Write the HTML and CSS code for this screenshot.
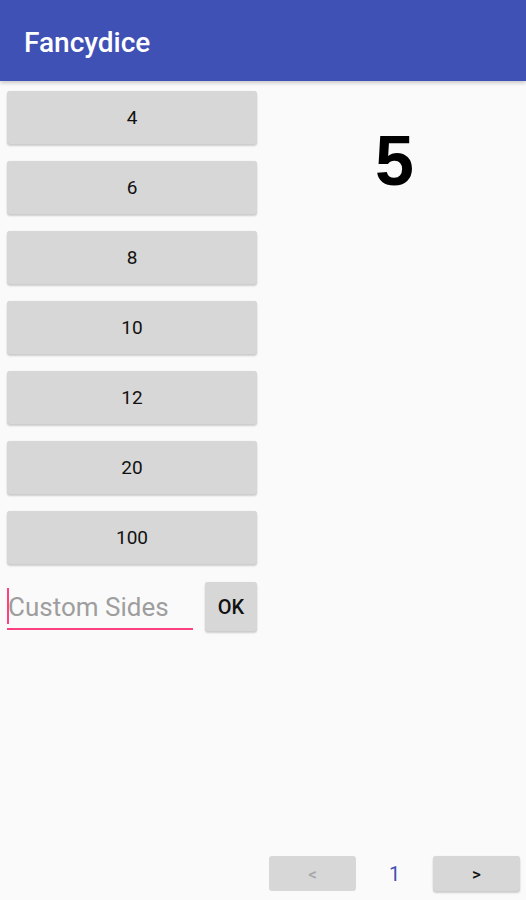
FILE: index.html
```html
<!DOCTYPE html>
<html>
<head>
    <meta charset="UTF-8">
    <meta name="viewport" content="width=device-width, initial-scale=1.0">
    <title>Fancydice</title>
    <link rel="stylesheet" href="styles.css">
</head>
<body>
    <div class="app">
        <header class="app-bar">
            <h1>Fancydice</h1>
        </header>
        <main class="content">
            <div class="dice-list">
                <button class="btn die">4</button>
                <button class="btn die">6</button>
                <button class="btn die">8</button>
                <button class="btn die">10</button>
                <button class="btn die">12</button>
                <button class="btn die">20</button>
                <button class="btn die">100</button>
                <div class="custom-row">
                    <div class="custom-input">
                        <span class="cursor"></span>
                        <input type="text" placeholder="Custom Sides">
                    </div>
                    <button class="btn ok">OK</button>
                </div>
            </div>
            <div class="result">
                <span class="roll">5</span>
            </div>
        </main>
        <footer class="pager">
            <button class="btn page-btn" disabled>&lt;</button>
            <span class="page-num">1</span>
            <button class="btn page-btn">&gt;</button>
        </footer>
    </div>
</body>
</html>
```

FILE: styles.css
```css
:root {
    --color-primary: #3f51b5;
    --color-accent: #ff4081;
    --color-bg: #fafafa;
    --color-button: #d6d7d6;
    --color-text: #111;
    --color-hint: #9e9e9e;
}

body {
    margin: 0;
    padding: 0;
    background-color: var(--color-bg);
    font-family: Roboto, "Noto Sans", sans-serif;
    color: var(--color-text);
}

.app {
    display: flex;
    flex-direction: column;
    min-height: 100vh;
}

.app-bar {
    height: 81px;
    background-color: var(--color-primary);
    display: flex;
    align-items: center;
    padding-left: 24px;
    box-shadow: 0 2px 4px rgba(0,0,0,0.2);
}

.app-bar h1 {
    margin: 4px 0 0 0;
    color: #fff;
    font-size: 28px;
    font-weight: 500;
}

.content {
    display: flex;
    flex: 1;
}

.dice-list {
    width: 250px;
    padding: 10px 6px 0 7px;
    display: flex;
    flex-direction: column;
    gap: 17px;
}

.btn {
    border: none;
    border-radius: 3px;
    background-color: var(--color-button);
    color: var(--color-text);
    font-family: Roboto, "Noto Sans", sans-serif;
    font-size: 19px;
    box-shadow: 0 2px 2px rgba(0,0,0,0.18), 0 0 1px rgba(0,0,0,0.12);
    cursor: pointer;
}

.die {
    height: 53px;
    width: 100%;
    padding: 0;
    font-weight: 400;
}

.custom-row {
    display: flex;
    align-items: flex-start;
    margin-top: 1px;
}

.custom-input {
    position: relative;
    width: 186px;
    height: 46px;
    border-bottom: 2px solid var(--color-accent);
    margin-right: 12px;
}

.custom-input input {
    width: 100%;
    height: 100%;
    border: none;
    background: transparent;
    outline: none;
    padding: 4px 0 0 1px;
    box-sizing: border-box;
    font-family: Roboto, "Noto Sans", sans-serif;
    font-size: 26px;
}

.custom-input input::placeholder {
    color: var(--color-hint);
}

.cursor {
    position: absolute;
    left: 0;
    top: 6px;
    width: 2px;
    height: 36px;
    background-color: var(--color-accent);
}

.ok {
    width: 52px;
    height: 49px;
    padding: 0;
    font-size: 20px;
    font-weight: 500;
}

.result {
    flex: 1;
    display: flex;
    justify-content: center;
    padding-top: 45px;
}

.roll {
    font-family: "Liberation Sans", Arial, sans-serif;
    font-weight: bold;
    font-size: 70px;
    line-height: 70px;
    color: #000;
}

.pager {
    display: flex;
    justify-content: flex-end;
    align-items: center;
    padding: 0 6px 9px 0;
}

.page-btn {
    width: 87px;
    height: 35px;
    padding: 0;
    font-size: 17px;
    font-weight: 500;
}

.page-btn:disabled {
    color: #a8a8a8;
    box-shadow: none;
}

.page-num {
    width: 77px;
    text-align: center;
    color: var(--color-primary);
    font-size: 20px;
}
```
